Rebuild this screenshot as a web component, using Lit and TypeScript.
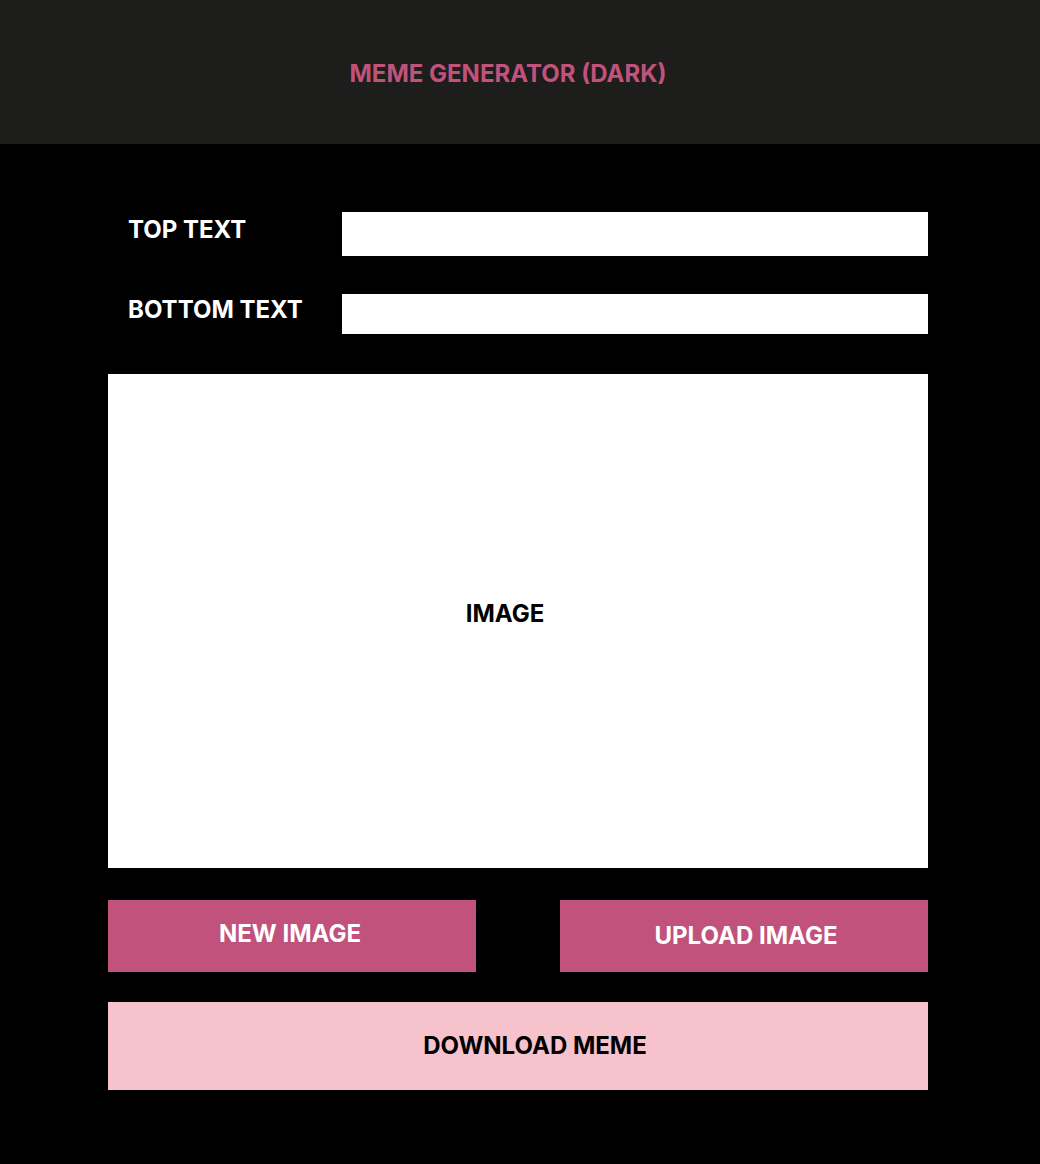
import { LitElement, html, css } from "lit";
import { customElement, state } from "lit/decorators.js";

@customElement("app-root")
export class AppRoot extends LitElement {
  static styles = css`
    :host {
      display: flex;
      flex-direction: column;
      min-height: 100vh;
      background: #000000;
      color: #ffffff;
      font-family: Inter, "Liberation Sans", sans-serif;
      font-size: 24px;
      font-weight: 700;
      line-height: 28px;
    }
    * {
      box-sizing: border-box;
    }
    .header {
      padding: 60px 24px 56px 0;
      background: #1d1d1b;
      text-align: center;
    }
    .title {
      margin: 0;
      color: #c0527b;
      font: inherit;
    }
    .main {
      display: flex;
      flex-direction: column;
      padding: 68px 112px 74px 108px;
    }
    .fields {
      display: grid;
      grid-template-columns: 214px 1fr;
      row-gap: 38px;
      column-gap: 20px;
      align-items: start;
      margin-bottom: 40px;
    }
    .label {
      padding: 4px 0 0 20px;
      white-space: nowrap;
    }
    .label.lower {
      padding-top: 2px;
    }
    .input {
      width: 100%;
      height: 44px;
      padding: 0 12px;
      border: 0;
      border-radius: 0;
      background: #ffffff;
      color: #000000;
      font: inherit;
    }
    .input.lower {
      height: 40px;
    }
    .preview {
      display: flex;
      align-items: center;
      justify-content: center;
      min-height: 494px;
      margin: 0 0 32px;
      padding: 0 26px 14px 0;
      background: #ffffff;
      color: #000000;
    }
    .actions {
      display: grid;
      grid-template-columns: 1fr 1fr;
      column-gap: 84px;
      margin-bottom: 30px;
    }
    .button {
      min-height: 72px;
      padding: 0;
      border: 0;
      border-radius: 0;
      background: #c0527b;
      color: #ffffff;
      font: inherit;
      text-align: center;
      cursor: pointer;
    }
    .button.new {
      padding: 0 4px 4px 0;
    }
    .button.upload {
      padding-left: 4px;
    }
    .button.download {
      min-height: 88px;
      padding-left: 34px;
      background: #f6c2cc;
      color: #000000;
    }
  `;

  @state() private topText = "";
  @state() private bottomText = "";

  render() {
    return html`
      <header class="header"><h1 class="title">MEME GENERATOR (DARK)</h1></header>
      <main class="main">
        <div class="fields">
          <label class="label" for="top">TOP TEXT</label>
          <input class="input" id="top" type="text" .value=${this.topText}
            @input=${(e: Event) => (this.topText = (e.target as HTMLInputElement).value)} />
          <label class="label lower" for="bottom">BOTTOM TEXT</label>
          <input class="input lower" id="bottom" type="text" .value=${this.bottomText}
            @input=${(e: Event) => (this.bottomText = (e.target as HTMLInputElement).value)} />
        </div>
        <figure class="preview">IMAGE</figure>
        <div class="actions">
          <button class="button new" type="button">NEW IMAGE</button>
          <button class="button upload" type="button">UPLOAD IMAGE</button>
        </div>
        <button class="button download" type="button">DOWNLOAD MEME</button>
      </main>
    `;
  }
}
